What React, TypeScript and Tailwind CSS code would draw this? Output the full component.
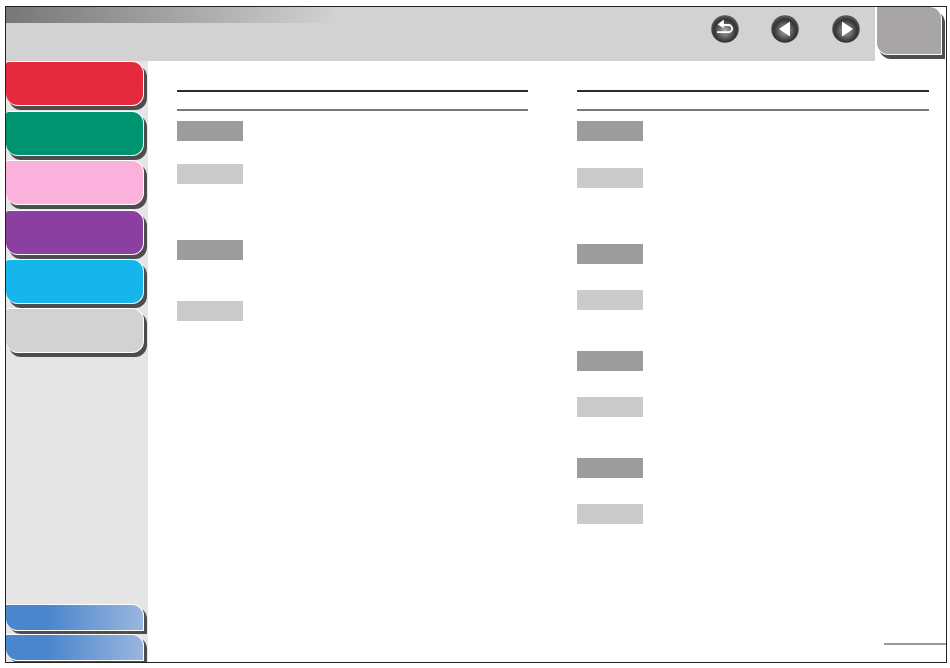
import React from "react";

const navItems = [
  { fill: "bg-[#e62a3d]", mt: "mt-0" },
  { fill: "bg-[#00936f]", mt: "mt-[5px]" },
  { fill: "bg-[#fab2dc]", mt: "mt-[4px]" },
  { fill: "bg-[#8b3fa0]", mt: "mt-[5px]" },
  { fill: "bg-[#16b5ec]", mt: "mt-[4px]" },
  { fill: "bg-[#d2d2d2]", mt: "mt-[4px]" },
];

type BarItem = { dark: boolean; mt: string };

const leftBars: BarItem[] = [
  { dark: true, mt: "mt-[10px]" },
  { dark: false, mt: "mt-[23px]" },
  { dark: true, mt: "mt-[56px]" },
  { dark: false, mt: "mt-[41px]" },
];

const rightBars: BarItem[] = [
  { dark: true, mt: "mt-[10px]" },
  { dark: false, mt: "mt-[27px]" },
  { dark: true, mt: "mt-[56px]" },
  { dark: false, mt: "mt-[26px]" },
  { dark: true, mt: "mt-[41px]" },
  { dark: false, mt: "mt-[26px]" },
  { dark: true, mt: "mt-[41px]" },
  { dark: false, mt: "mt-[26px]" },
];

function RoundIcon({ id, children }: { id: string; children: React.ReactNode }) {
  return (
    <svg width="28" height="28" viewBox="0 0 28 28" className="block">
      <defs>
        <radialGradient id={id} cx="50%" cy="56%" r="52%">
          <stop offset="0%" stopColor="#b4b4b4" />
          <stop offset="32%" stopColor="#7a7a7a" />
          <stop offset="78%" stopColor="#333333" />
          <stop offset="100%" stopColor="#555555" />
        </radialGradient>
      </defs>
      <circle cx="14" cy="14" r="13.8" fill={`url(#${id})`} />
      {children}
    </svg>
  );
}

function Column({ bars, width }: { bars: BarItem[]; width: string }) {
  return (
    <div className={`${width} flex flex-col`}>
      <div className="h-[2px] bg-[#2b2b2b]" />
      <div className="h-[2px] mt-[17px] bg-[#777777]" />
      {bars.map((b, i) => (
        <div
          key={i}
          className={`${b.mt} w-[66px] h-5 ${b.dark ? "bg-[#9c9c9c]" : "bg-[#cbcbcb]"}`}
        />
      ))}
    </div>
  );
}

export default function App() {
  return (
    <div className="w-[950px] h-[668px] bg-white pt-[6px] pl-[5px]">
      <div className="w-[942px] h-[657px] border border-[#222222] flex flex-col bg-white overflow-hidden">
        <header className="h-[54px] flex shrink-0">
          <div className="w-[869px] bg-[#d2d2d2] bg-[linear-gradient(90deg,#777777,#d2d2d2)] bg-no-repeat bg-[length:334px_16px] flex justify-end gap-[32px] pt-[8px] pr-[15px]">
            <RoundIcon id="g1">
              <path
                d="M6 17.2h11.5a3.6 3.6 0 0 0 0-7.2H11"
                fill="none"
                stroke="#fff"
                strokeWidth="1.8"
              />
              <path d="M12.8 4.6 6.6 9.4 12.8 13.2Z" fill="#fff" />
            </RoundIcon>
            <RoundIcon id="g2">
              <path d="M19 6.5v15L8 14Z" fill="#fff" />
            </RoundIcon>
            <div className="ml-px">
              <RoundIcon id="g3">
                <path d="M10 6.5v15L21 14Z" fill="#fff" />
              </RoundIcon>
            </div>
          </div>
          <div className="pl-px relative z-10">
            <div className="w-[66px] h-[48px] bg-[#a7a5a5] border-b border-r border-l border-white rounded-tr-[12px] rounded-bl-[12px] shadow-[3px_4px_0_#4d4d4d]" />
          </div>
        </header>
        <div className="flex-1 flex min-h-0">
          <aside className="w-[142px] bg-[#e5e5e5] flex flex-col shrink-0">
            {navItems.map((n, i) => (
              <div
                key={i}
                className={`${n.mt} ${n.fill} w-[138px] h-[45px] border-t border-r border-b border-white rounded-tl-[3px] rounded-tr-[12px] rounded-bl-[12px] rounded-br-[12px] shadow-[3px_4px_0_#4d4d4d]`}
              />
            ))}
            <div className="mt-auto flex flex-col gap-[3px] pb-[1px]">
              <div className="w-[138px] h-[27px] bg-[linear-gradient(90deg,#4a86cd_30%,#9ab5de)] border-t border-r border-b border-white rounded-tr-[12px] rounded-bl-[12px] shadow-[3px_3px_0_#4d4d4d]" />
              <div className="w-[138px] h-[27px] bg-[linear-gradient(90deg,#4a86cd_30%,#9ab5de)] border-t border-r border-b border-white rounded-tr-[12px] rounded-bl-[12px] shadow-[3px_3px_0_#4d4d4d]" />
            </div>
          </aside>
          <main className="flex-1 flex flex-col min-w-0">
            <div className="flex gap-[49px] pl-[29px] pt-[29px]">
              <Column bars={leftBars} width="w-[351px]" />
              <Column bars={rightBars} width="w-[352px]" />
            </div>
            <div className="mt-auto mb-[17px] flex justify-end">
              <div className="w-[62px] h-[2px] bg-[#999999]" />
            </div>
          </main>
        </div>
      </div>
    </div>
  );
}
